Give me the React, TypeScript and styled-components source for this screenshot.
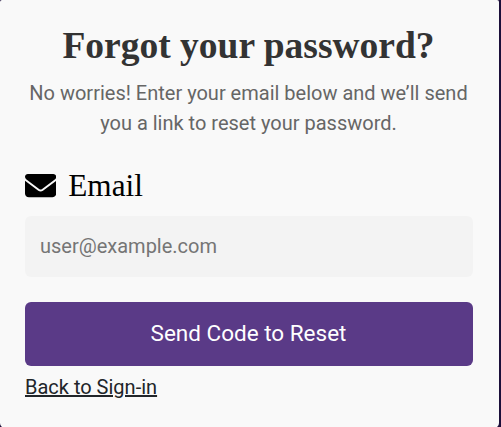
import React from "react";
import styled, { createGlobalStyle } from "styled-components";
import { FaEnvelope } from "react-icons/fa6";

const GlobalStyle = createGlobalStyle`
  *, *::before, *::after { box-sizing: border-box; }
  html, body { margin: 0; height: 100%; overflow: hidden; }
  body { background: #1c0f3a; }
`;

const Card = styled.main`
  display: flex;
  flex-direction: column;
  width: 499px;
  height: 428px;
  padding: 23px 26px 0 25px;
  border-radius: 2px 2px 5px 5px;
  background: #f9f9f9;
  font-family: Roboto, sans-serif;
`;

const Title = styled.h1`
  margin: 0;
  padding-right: 1px;
  font: bold 37.5px/45px "Liberation Serif", serif;
  color: #333;
  text-align: center;
  white-space: nowrap;
`;

const Description = styled.p`
  margin: 10px 0 0;
  padding-right: 1px;
  font-size: 20px;
  line-height: 30px;
  color: #666;
  text-align: center;
`;

const Form = styled.form`
  display: flex;
  flex-direction: column;
  margin-top: 29px;
`;

const Label = styled.label`
  display: flex;
  align-items: center;
  gap: 12px;
  height: 38px;
  font: 31.25px/38px "Liberation Serif", serif;
  color: #000;
`;

const EmailInput = styled.input`
  height: 61px;
  margin: 11px 0 0;
  padding: 0 15px 2px;
  border: 0;
  border-radius: 6px;
  outline: 0;
  background: #f3f3f3;
  font: 20px Roboto, sans-serif;
  color: #333;

  &::placeholder {
    color: #757575;
    opacity: 1;
  }
`;

const SubmitButton = styled.button`
  height: 64px;
  margin: 25px 0 0;
  padding: 0 1px 2px 0;
  border: 0;
  border-radius: 6px;
  background: #5a3a87;
  font: 22.5px Roboto, sans-serif;
  color: #fff;
`;

const BackLink = styled.a`
  align-self: flex-start;
  margin-top: 6px;
  font-size: 20px;
  line-height: 30px;
  color: #212529;
  text-decoration: underline;
`;

export default function App() {
  return (
    <>
      <GlobalStyle />
      <Card>
        <Title>Forgot your password?</Title>
        <Description>
          No worries! Enter your email below and we’ll send you a link to reset your password.
        </Description>
        <Form>
          <Label htmlFor="email">
            <FaEnvelope size={31.25} />
            Email
          </Label>
          <EmailInput id="email" type="email" placeholder="user@example.com" />
          <SubmitButton type="button">Send Code to Reset</SubmitButton>
        </Form>
        <BackLink href="#">Back to Sign-in</BackLink>
      </Card>
    </>
  );
}
